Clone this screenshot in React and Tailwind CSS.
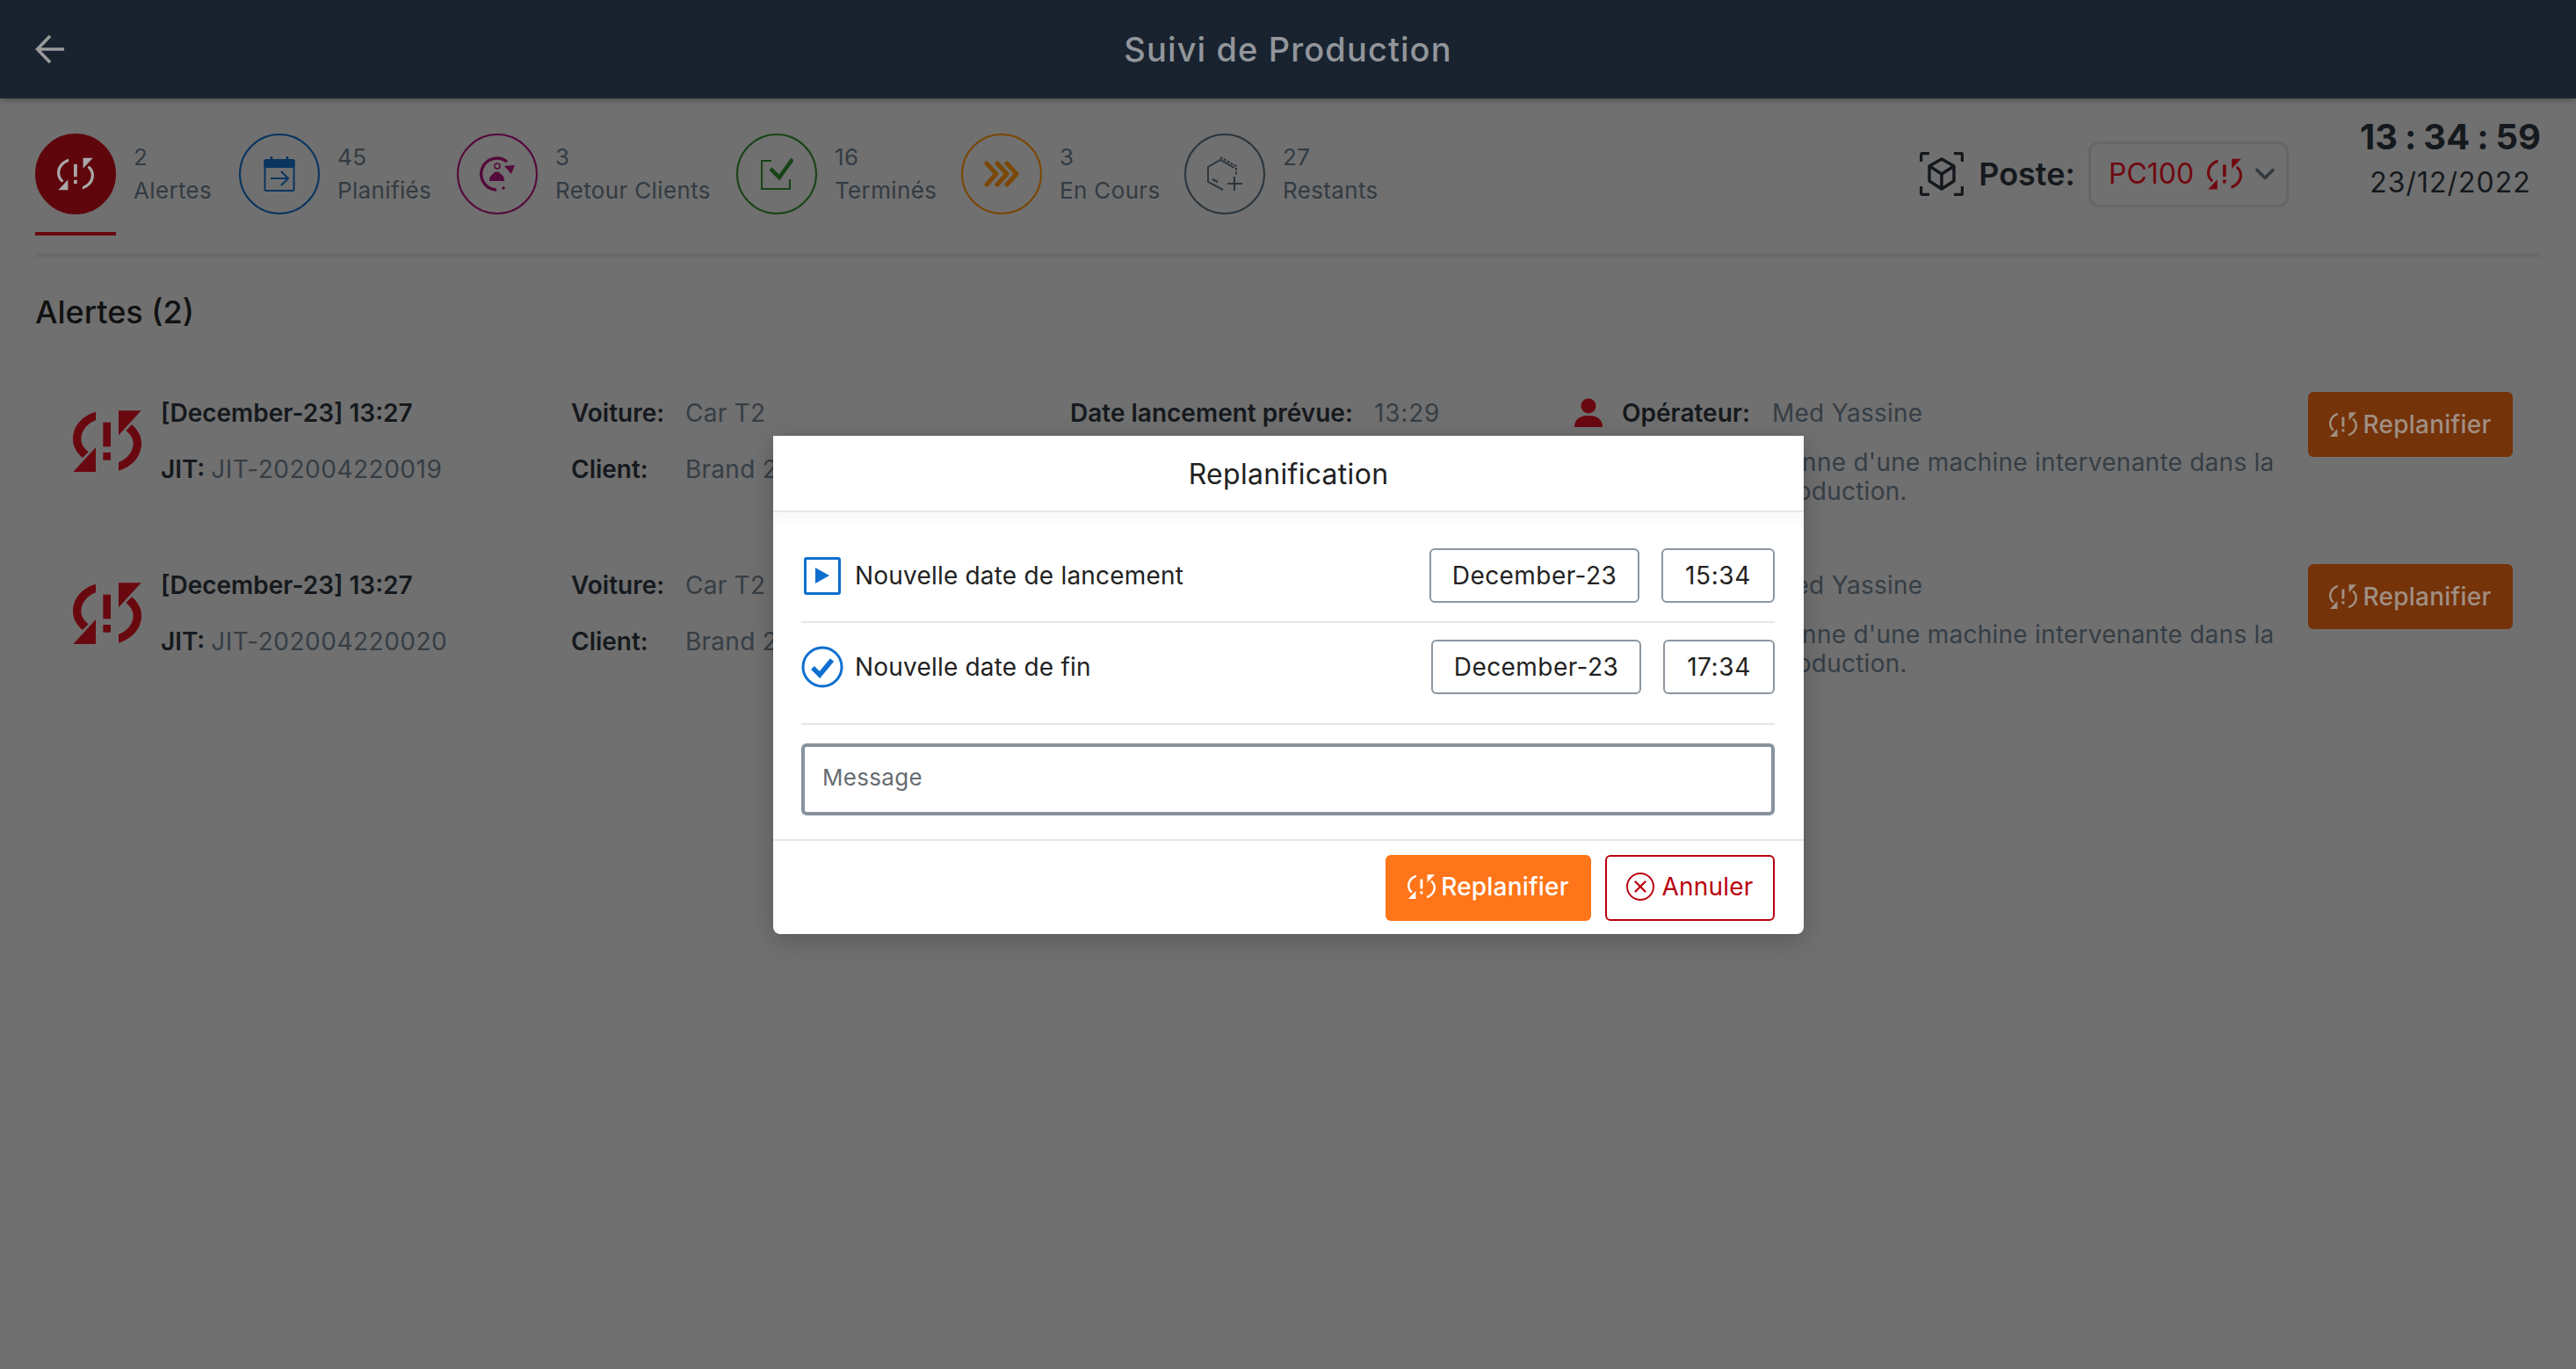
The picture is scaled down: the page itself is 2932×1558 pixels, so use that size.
import React from 'react';
import { ChevronDown, X } from 'lucide-react';

const ReplanIcon = ({ className }) => (
  <svg viewBox="69 81 234 210" className={className} fill="currentColor">
    <g>
      <path d="M147 86C100 100 69 135 69 180c0 25 14 47 33 63l20-20c-15-12-25-27-25-43 0-30 21-54 50-65z" />
      <path d="M70 291h77v-84z" />
    </g>
    <g transform="rotate(180 186 186.5)">
      <path d="M147 86C100 100 69 135 69 180c0 25 14 47 33 63l20-20c-15-12-25-27-25-43 0-30 21-54 50-65z" />
      <path d="M70 291h77v-84z" />
    </g>
    <rect x="172" y="122" width="26" height="83" />
    <rect x="172" y="225" width="26" height="26" />
  </svg>
);

// same glyph with lighter arcs, reads better at button size
const ReplanIconThin = ({ className }) => (
  <svg viewBox="69 81 234 210" className={className} fill="currentColor">
    <g>
      <path d="M142 90C98 103 69 137 69 180c0 24 12 44 30 60l12-12c-15-13-24-30-24-48 0-32 22-60 55-72z" />
      <path d="M76 288h62v-66z" />
    </g>
    <g transform="rotate(180 186 186.5)">
      <path d="M142 90C98 103 69 137 69 180c0 24 12 44 30 60l12-12c-15-13-24-30-24-48 0-32 22-60 55-72z" />
      <path d="M76 288h62v-66z" />
    </g>
    <rect x="175" y="124" width="21" height="80" />
    <rect x="175" y="224" width="21" height="24" />
  </svg>
);

const CalendarIcon = () => (
  <svg viewBox="0 0 36 42" className="w-[36px] h-[42px]" fill="none" stroke="#0a3560" strokeWidth="2">
    <rect x="1.5" y="5" width="33" height="35" rx="1.5" />
    <path d="M1.5 6h33v7h-33z" fill="#0a3560" />
    <path d="M9 1v6M27 1v6" strokeWidth="2.5" />
    <path d="M8 26h19M20 18l8 8-8 8" strokeWidth="2" />
  </svg>
);

const RetourIcon = () => (
  <svg viewBox="0 0 40 40" className="w-[40px] h-[40px]" fill="none">
    <path d="M31 6A18 18 0 1 0 19 38" stroke="#540a3b" strokeWidth="3.4" />
    <path d="M28 11l12-1-4 10z" fill="#540a3b" />
    <circle cx="27" cy="36" r="1.800" fill="#540a3b" />
    <circle cx="20" cy="11" r="3" stroke="#540a3b" strokeWidth="1.500" />
    <path d="M11 28c0-6 3-7 5-9 1-2 6-2 7 0 2 2 5 3 5 9z" fill="#540a3b" />
  </svg>
);

const TermineIcon = () => (
  <svg viewBox="0 0 37 38" className="w-[37px] h-[38px]" fill="none">
    <path d="M12 4H1v32h32V25" stroke="#184418" strokeWidth="2.200" />
    <path d="M11 13l10 10L36 2" stroke="#184418" strokeWidth="4.500" />
  </svg>
);

const EnCoursIcon = () => (
  <svg viewBox="0 0 40 30" className="w-[40px] h-[30px]" fill="none" stroke="#7a4705" strokeWidth="5" strokeLinecap="round" strokeLinejoin="round">
    <path d="M3 3l11 12L3 27M15 3l11 12-11 12M26 3l11 12-11 12" />
  </svg>
);

const RestantIcon = () => (
  <svg viewBox="0 0 41 40" className="w-[41px] h-[40px]" fill="none" stroke="#2c363e" strokeWidth="2">
    <path d="M18 38L1 29V12l14-8 16 9" />
    <path d="M15 1l18 10v11" strokeDasharray="3 1.500" />
    <path d="M6 26l6 3" strokeWidth="2.500" />
    <path d="M23 31h17M31 23v16" strokeWidth="2.200" />
  </svg>
);

const PosteIcon = () => (
  <svg viewBox="0 0 50 50" className="w-[50px] h-[50px]" fill="none" stroke="#14181c" strokeWidth="3.400">
    <path d="M1.500 11V3.500a2 2 0 0 1 2-2H11M39 1.500h7.500a2 2 0 0 1 2 2V11M48.500 39v7.500a2 2 0 0 1-2 2H39M11 48.500H3.500a2 2 0 0 1-2-2V39" />
    <path d="M25 8l14 8v17l-14 9-14-9V16zM11 16l14 9 14-9M25 25v17" strokeLinejoin="round" />
  </svg>
);

const UserIcon = () => (
  <svg viewBox="0 0 36 36" className="w-[36px] h-[36px]" fill="#6a0810">
    <circle cx="18" cy="10" r="8.500" />
    <path d="M2 34c0-9 6-13 16-13s16 4 16 13z" />
  </svg>
);

const BackIcon = () => (
  <svg viewBox="0 0 34 34" className="w-[34px] h-[34px]" fill="none" stroke="#9b9b9b" strokeWidth="3.500">
    <path d="M33 17H3M17 2L2.500 17 17 32" />
  </svg>
);

const tabs = [
  { count: '2', label: 'Alertes', width: 'w-[232px]', circle: 'border-[3px] bg-[#5f060c] border-[#5f060c] text-[#a9a9a9]', icon: <ReplanIconThin className="w-[42px] h-[38px]" />, active: true },
  { count: '45', label: 'Planifiés', width: 'w-[248px]', circle: 'border-2 border-[#0a3560]', icon: <CalendarIcon /> },
  { count: '3', label: 'Retour Clients', width: 'w-[318px]', circle: 'border-2 border-[#540a3b]', icon: <RetourIcon /> },
  { count: '16', label: 'Terminés', width: 'w-[256px]', circle: 'border-2 border-[#184418]', icon: <TermineIcon /> },
  { count: '3', label: 'En Cours', width: 'w-[254px]', circle: 'border-2 border-[#7a4705]', icon: <EnCoursIcon /> },
  { count: '27', label: 'Restants', width: 'w-[240px]', circle: 'border-2 border-[#2c363e]', icon: <RestantIcon /> },
];

const alerts = [
  { jit: 'JIT-202004220019' },
  { jit: 'JIT-202004220020' },
];

const Label = ({ children, className = '' }) => (
  <span className={`font-semibold tracking-[0px] text-[#15191d] ${className}`}>{children}</span>
);

const Value = ({ children, className = '' }) => <span className={`text-[#363e45] ${className}`}>{children}</span>;

const AlertRow = ({ jit }) => (
  <div className="flex h-[196px] pl-[43px] text-[28px] tracking-[0.25px]">
    <div className="w-[100px] pt-[21px] text-[#6a0810]">
      <ReplanIcon className="w-[78px] h-[70px]" />
    </div>
    <div className="w-[467px] pt-[1px] flex flex-col gap-[18px]">
      <Label className="h-[46px] leading-[46px]">[December-23] 13:27</Label>
      <div className="h-[46px] leading-[46px]">
        <Label>JIT: </Label>
        <Value className="tracking-[0.5px]">{jit}</Value>
      </div>
    </div>
    <div className="w-[568px] pt-[1px] flex flex-col gap-[18px]">
      <div className="h-[46px] leading-[46px] flex">
        <Label className="w-[130px]">Voiture:</Label>
        <Value>Car T2</Value>
      </div>
      <div className="h-[46px] leading-[46px] flex">
        <Label className="w-[130px]">Client:</Label>
        <Value>Brand 2</Value>
      </div>
    </div>
    <div className="w-[572px] mt-[1px] h-[46px] leading-[46px] flex">
      <Label className="w-[346px]">Date lancement prévue:</Label>
      <Value className="tracking-[0.8px]">13:29</Value>
    </div>
    <div className="w-[837px] pt-[1px] flex flex-col">
      <div className="h-[46px] leading-[46px] flex items-center">
        <UserIcon />
        <Label className="ml-[20px] w-[171px]">Opérateur:</Label>
        <Value>Med Yassine</Value>
      </div>
      <div className="mt-[17px] ml-[227px] w-[590px] leading-[33px] text-[#363e45]">
        Panne d'une machine intervenante dans la production.
      </div>
    </div>
    <button className="w-[233px] h-[74px] rounded-[6px] bg-[#75330a] text-[#a08f82] flex items-center justify-center gap-[6px] font-medium">
      <ReplanIconThin className="w-[32px] h-[30px]" />
      Replanifier
    </button>
  </div>
);

const DateRow = ({ icon, label, date, time, dateClass, timeClass, rowClass }) => (
  <div className={`flex items-center ${rowClass}`}>
    <div className="w-[61px] flex items-center">{icon}</div>
    <span className="text-[28px] tracking-[0.2px] text-[#222]">{label}</span>
    <div className={`ml-auto h-[62px] flex items-center justify-center rounded-[6px] border-2 border-[#8b96a1] text-[28px] tracking-[0.45px] text-[#222] ${dateClass}`}>
      {date}
    </div>
    <div className={`ml-[25px] h-[62px] flex items-center justify-center rounded-[6px] border-2 border-[#8b96a1] text-[28px] tracking-[0.6px] text-[#222] ${timeClass}`}>
      {time}
    </div>
  </div>
);

export default function App() {
  return (
    <div className="relative w-[2932px] h-[1558px] overflow-hidden bg-[#707070] font-['Inter',sans-serif]">
      <header className="relative h-[112px] bg-[#19232f] flex items-center justify-center shadow-[0_2px_6px_rgba(0,0,0,0.3)]">
        <div className="absolute left-[40px] top-[39px]">
          <BackIcon />
        </div>
        <h1 className="text-[38px] font-medium tracking-[1.1px] text-[#92969b]">Suivi de Production</h1>
      </header>

      <main className="px-10 pt-10">
        <div className="flex justify-between">
          <div className="flex">
            {tabs.map((tab) => (
              <div key={tab.label} className={`flex gap-[20px] ${tab.width}`}>
                <div className="w-[92px]">
                  <div className={`w-[92px] h-[92px] rounded-full flex items-center justify-center ${tab.circle}`}>
                    {tab.icon}
                  </div>
                  <div className={`mt-5 h-1 ${tab.active ? 'bg-[#6a0810]' : ''}`} />
                </div>
                <div className="h-[92px] flex flex-col justify-center text-[26px] leading-[38px] tracking-[0.35px] text-[#333b42]">
                  <span>{tab.count}</span>
                  <span>{tab.label}</span>
                </div>
              </div>
            ))}
          </div>
          <div className="flex items-start">
            <div className="h-[92px] flex items-center">
              <PosteIcon />
              <span className="ml-[17px] text-[36px] font-semibold text-[#15191d]">Poste:</span>
              <div className="ml-[15px] w-[228px] h-[75px] rounded-[12px] border-[3px] border-[#666] flex items-center pl-[20px] text-[#70080f]">
                <span className="text-[32px]">PC100</span>
                <ReplanIconThin className="ml-[15px] w-[40px] h-[38px]" />
                <ChevronDown className="ml-[8px] w-[36px] h-[36px] text-[#333b42]" strokeWidth={2.5} />
              </div>
            </div>
            <div className="ml-[81px] -mt-[20px] w-[206px] text-center text-[#15191d]">
              <div className="flex justify-between text-[40px] leading-[48px] font-bold">
                <span>13</span>
                <span>:</span>
                <span>34</span>
                <span>:</span>
                <span>59</span>
              </div>
              <div className="mt-[6px] text-[32px] leading-[44px] tracking-[1px]">23/12/2022</div>
            </div>
          </div>
        </div>

        <div className="mt-5 h-[5px] bg-[#6a6a6a]" />

        <h2 className="mt-10 h-[44px] text-[36px] leading-[44px] font-medium text-[#111]">Alertes (2)</h2>

        <div className="mt-[69px]">
          {alerts.map((alert) => (
            <AlertRow key={alert.jit} jit={alert.jit} />
          ))}
        </div>
      </main>

      <div className="absolute left-[880px] top-[496px] w-[1173px] h-[567px] bg-white rounded-b-[8px] shadow-[0_8px_30px_rgba(0,0,0,0.2)]">
        <div className="h-[87px] pt-[2px] border-b-2 border-[#e6e6e6] flex items-center justify-center text-[32px] tracking-[0.3px] text-[#222] shadow-[0_6px_14px_rgba(0,0,0,0.04)]">
          Replanification
        </div>
        <div className="px-[32px] pr-[33px] pt-[41px]">
          <DateRow
            label="Nouvelle date de lancement"
            date="December-23"
            time="15:34"
            dateClass="w-[239px]"
            timeClass="w-[129px]"
            rowClass="pb-[21px] border-b-2 border-[#e6e6e6]"
            icon={
              <div className="ml-[3px] w-[42px] h-[43px] rounded-[3px] border-[3px] border-[#0f6fd0] flex items-center justify-center">
                <svg viewBox="0 0 18 20" className="w-[18px] h-[20px]"><path d="M1 1l16 9L1 19z" fill="#0f6fd0" /></svg>
              </div>
            }
          />
          <DateRow
            label="Nouvelle date de fin"
            date="December-23"
            time="17:34"
            dateClass="w-[239px]"
            timeClass="w-[127px]"
            rowClass="pt-[19px] pb-[33px] border-b-2 border-[#e6e6e6]"
            icon={
              <svg viewBox="0 0 48 48" className="w-[48px] h-[48px]" fill="none">
                <circle cx="24" cy="24" r="22" stroke="#0f6fd0" strokeWidth="3" />
                <path d="M13 25l8 8 14-17" stroke="#0f6fd0" strokeWidth="5.500" />
              </svg>
            }
          />
          <div className="mt-[21px] h-[82px] rounded-[6px] border-4 border-[#87929c] flex items-center pl-[20px] pb-[6px] text-[26px] tracking-[0.3px] text-[#666d73]">
            Message
          </div>
        </div>
        <div className="mt-[27px] border-t-2 border-[#e6e6e6] pt-[16px] pr-[33px] flex justify-end gap-[16px]">
          <button className="w-[234px] h-[75px] pb-[4px] rounded-[6px] bg-[#ff7519] text-white flex items-center justify-center gap-[6px] text-[28px] font-medium tracking-[0.2px]">
            <ReplanIconThin className="w-[32px] h-[30px]" />
            Replanifier
          </button>
          <button className="w-[193px] h-[75px] pb-[4px] rounded-[6px] border-2 border-[#b8000f] text-[#b8000f] flex items-center justify-center gap-[8px] text-[28px] tracking-[0.2px]">
            <span className="w-[32px] h-[32px] rounded-full border-2 border-[#b8000f] flex items-center justify-center">
              <X className="w-[22px] h-[22px]" strokeWidth={2.5} />
            </span>
            Annuler
          </button>
        </div>
      </div>
    </div>
  );
}
